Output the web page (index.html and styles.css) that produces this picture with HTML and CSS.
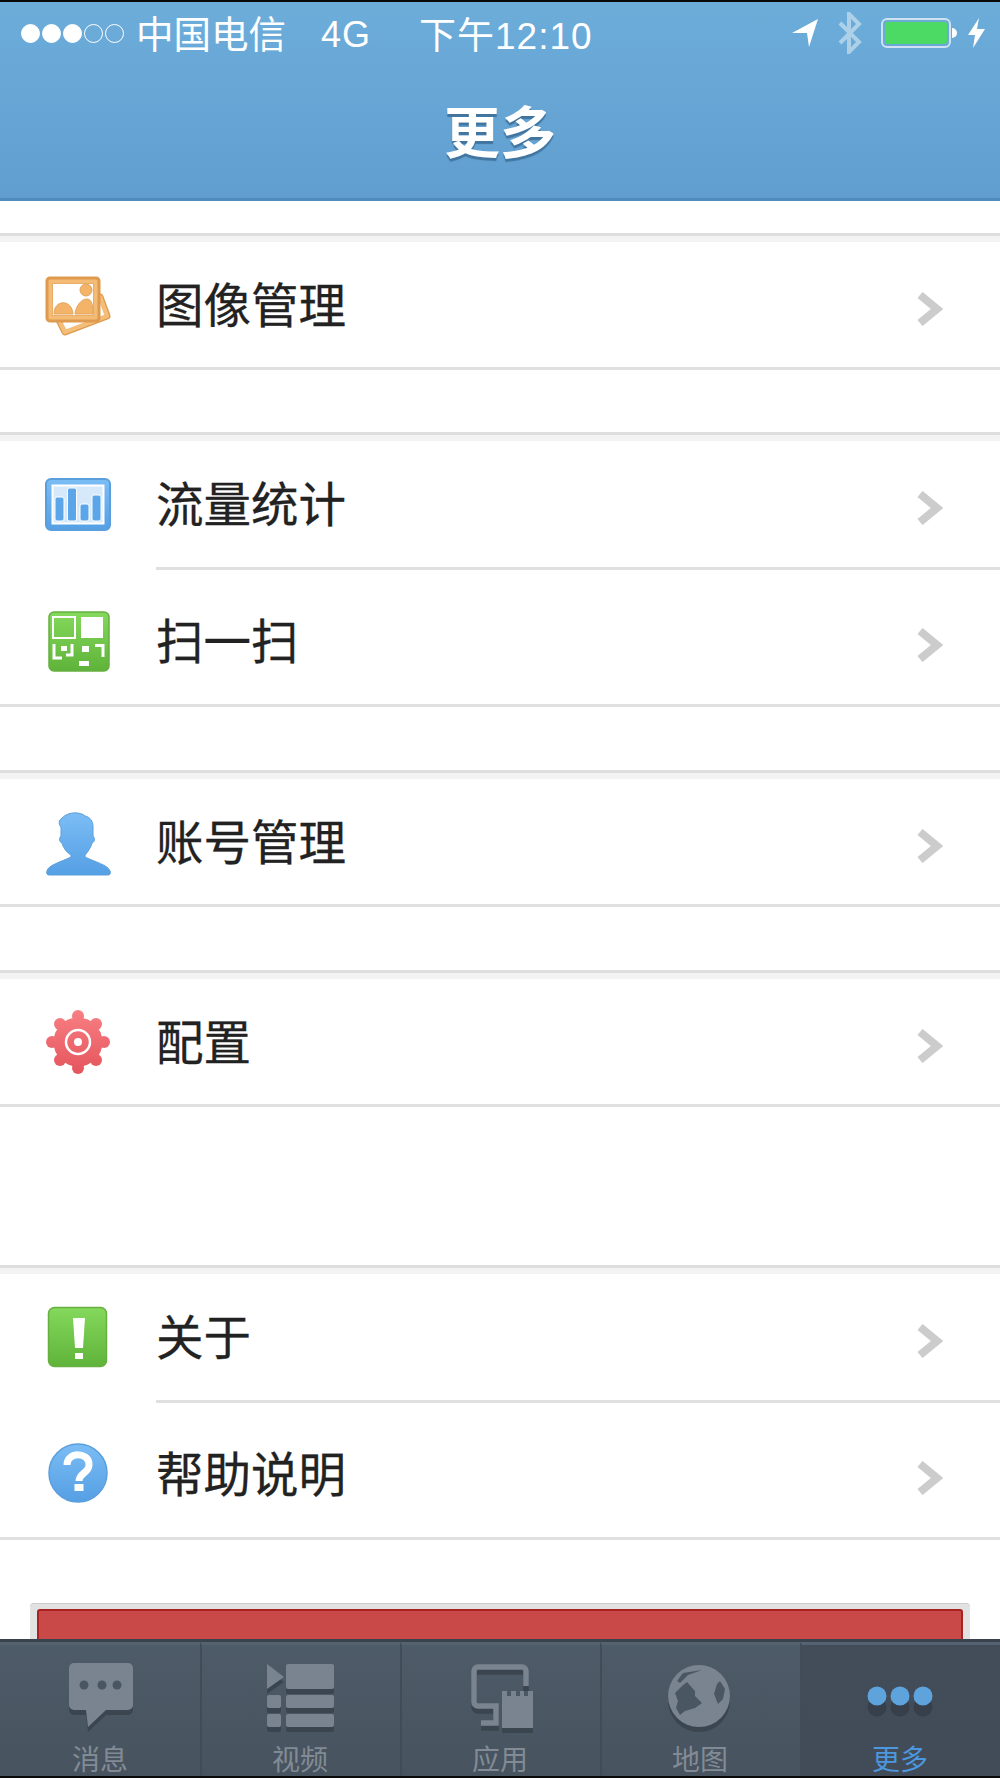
FILE: index.html
```html
<!DOCTYPE html>
<html lang="zh-CN">
<head>
  <meta charset="UTF-8">
  <title>更多</title>
  <meta name="viewport" content="width=device-width, initial-scale=1.0">
  <link rel="stylesheet" href="styles.css">
</head>
<body>
  <div class="phone">
    <header class="top-bar">
      <div class="status-bar">
        <div class="signal">
          <span class="dot on"></span><span class="dot on"></span><span class="dot on"></span><span class="dot"></span><span class="dot"></span>
        </div>
        <span class="carrier">中国电信</span>
        <span class="network">4G</span>
        <span class="clock">下午12:10</span>
        <div class="status-right">
          <svg class="st-arrow" width="26" height="28" viewBox="0 0 26 28"><path d="M0 14 26 0 17 28 15 14Z" fill="#fff"/></svg>
          <svg class="st-bt" width="24" height="42" viewBox="0 0 24 42"><path d="M2 11 21 30 11 40V2L21 12 2 31" fill="none" stroke="#fff" stroke-opacity=".45" stroke-width="4"/></svg>
          <div class="battery"><div class="battery-fill"></div></div>
          <div class="battery-nub"></div>
          <svg class="st-bolt" width="17" height="30" viewBox="0 0 17 30"><path d="M11 0 0 17H7L5 30 17 11H9Z" fill="#fff"/></svg>
        </div>
      </div>
      <h1 class="page-title">更多</h1>
    </header>

    <main class="content">
      <section class="group">
        <a class="row">
          <svg class="row-icon" viewBox="0 0 70 70">
            <path d="M17 52 22 62 64 46 57 27Z" fill="#fff" stroke="#de9a4e" stroke-width="7" stroke-linejoin="round"/>
            <path d="M17 52 22 62 64 46 57 27Z" fill="#fff" stroke="#f4bd78" stroke-width="4.500" stroke-linejoin="round"/>
            <rect x="4" y="8" width="52" height="43" rx="3" fill="#f4bb74" stroke="#de9a4e" stroke-width="3"/>
            <rect x="9" y="13" width="42" height="33" fill="#e8ad68"/>
            <rect x="10" y="14" width="40" height="31" fill="#fff"/>
            <circle cx="43" cy="20" r="6" fill="#f3b469" stroke="#e3a45c"/>
            <path d="M11 44C11 29 29 29 30 44Z" fill="#f3b469" stroke="#e3a45c"/>
            <path d="M32 44C33 36 38 29 44 29 49 29 50 36 50 44Z" fill="#f3b469" stroke="#e3a45c"/>
          </svg>
          <span class="row-label">图像管理</span>
          <svg class="chevron" width="26" height="34" viewBox="0 0 26 34"><path d="M3 3 20 17 3 31" fill="none" stroke="#ccc" stroke-width="8"/></svg>
        </a>
      </section>

      <section class="group group-double">
        <a class="row">
          <svg class="row-icon" viewBox="0 0 70 70">
            <defs>
              <linearGradient id="blue" x1="0" y1="0" x2="0" y2="1"><stop offset="0" stop-color="#7bbdf5"/><stop offset="1" stop-color="#559fe4"/></linearGradient>
            </defs>
            <rect x="3" y="10" width="64" height="51" rx="5" fill="url(#blue)" stroke="#5a9fdc" stroke-width="2"/>
            <rect x="9.500" y="16.500" width="51" height="38" fill="#d6e9fa" stroke="#fff" stroke-width="2"/>
            <g fill="#5ba6e8" stroke="#fff">
              <rect x="12" y="28" width="9" height="24" rx="2"/>
              <rect x="24.500" y="19" width="9" height="33" rx="2"/>
              <rect x="37" y="35" width="9" height="17" rx="2"/>
              <rect x="49" y="26" width="9" height="26" rx="2"/>
            </g>
          </svg>
          <span class="row-label">流量统计</span>
          <svg class="chevron" width="26" height="34" viewBox="0 0 26 34"><path d="M3 3 20 17 3 31" fill="none" stroke="#ccc" stroke-width="8"/></svg>
        </a>
        <a class="row inset">
          <svg class="row-icon" viewBox="0 0 70 70">
            <defs>
              <linearGradient id="green" x1="0" y1="0" x2="0" y2="1"><stop offset="0" stop-color="#84d95c"/><stop offset="1" stop-color="#5fb33a"/></linearGradient>
            </defs>
            <rect x="6" y="6" width="60" height="59" rx="5" fill="url(#green)" stroke="#66b040" stroke-width="1.500"/>
            <rect x="10" y="11" width="22" height="21" fill="none" stroke="#fff" stroke-width="2"/>
            <rect x="38" y="11" width="22" height="21" fill="#fff"/>
            <path d="M11 38V52H19M29 38V49H23M60 38V51" fill="none" stroke="#fff" stroke-width="3"/>
            <rect x="18" y="40" width="6" height="5" fill="#fff"/>
            <rect x="39" y="40" width="7" height="6" fill="#fff"/>
            <rect x="36" y="55" width="10" height="5" fill="#fff"/>
            <rect x="52" y="38" width="8" height="3" fill="#fff"/>
          </svg>
          <span class="row-label">扫一扫</span>
          <svg class="chevron" width="26" height="34" viewBox="0 0 26 34"><path d="M3 3 20 17 3 31" fill="none" stroke="#ccc" stroke-width="8"/></svg>
        </a>
      </section>

      <section class="group">
        <a class="row">
          <svg class="row-icon" viewBox="0 0 70 70">
            <path d="M4 64C5 58 18 55 28 50V48C23 45 20 40 19 36 16 35 16 31 18 29V20C15 17 16 13 19 11 26 4 38 5 42 9 47 10 50 14 50 20V29C52 31 52 35 49 36 48 40 45 45 42 48V50C52 55 65 58 67 64 68 66 67 68 65 68H6C4 68 3 66 4 64Z" fill="url(#blue)" stroke="#5a9fdc" stroke-width="1"/>
          </svg>
          <span class="row-label">账号管理</span>
          <svg class="chevron" width="26" height="34" viewBox="0 0 26 34"><path d="M3 3 20 17 3 31" fill="none" stroke="#ccc" stroke-width="8"/></svg>
        </a>
      </section>

      <section class="group group-spaced">
        <a class="row">
          <svg class="row-icon" viewBox="0 0 70 70">
            <defs>
              <linearGradient id="red" gradientUnits="userSpaceOnUse" x1="0" y1="3" x2="0" y2="66"><stop offset="0" stop-color="#f77f83"/><stop offset="1" stop-color="#e5555d"/></linearGradient>
            </defs>
            <g fill="url(#red)">
              <circle cx="35" cy="35" r="24.500"/>
              <circle cx="35" cy="9" r="6"/><circle cx="35" cy="61" r="6"/>
              <circle cx="9" cy="35" r="6"/><circle cx="61" cy="35" r="6"/>
              <circle cx="17" cy="17" r="6"/><circle cx="53" cy="17" r="6"/>
              <circle cx="17" cy="53" r="6"/><circle cx="53" cy="53" r="6"/>
            </g>
            <circle cx="35" cy="35" r="12" fill="none" stroke="#fff" stroke-width="2.500"/>
            <circle cx="35" cy="35" r="4" fill="#fff"/>
          </svg>
          <span class="row-label">配置</span>
          <svg class="chevron" width="26" height="34" viewBox="0 0 26 34"><path d="M3 3 20 17 3 31" fill="none" stroke="#ccc" stroke-width="8"/></svg>
        </a>
      </section>

      <section class="group group-double">
        <a class="row">
          <svg class="row-icon" viewBox="0 0 70 70">
            <rect x="5.500" y="5.500" width="58" height="59" rx="6" fill="url(#green)" stroke="#66b040" stroke-width="1.500"/>
            <path d="M30 16H42L40 46H32Z" fill="#fff"/>
            <rect x="32" y="51" width="8" height="6" fill="#fff"/>
          </svg>
          <span class="row-label">关于</span>
          <svg class="chevron" width="26" height="34" viewBox="0 0 26 34"><path d="M3 3 20 17 3 31" fill="none" stroke="#ccc" stroke-width="8"/></svg>
        </a>
        <a class="row inset">
          <svg class="row-icon" viewBox="0 0 70 70">
            <circle cx="35" cy="34" r="29" fill="url(#blue)" stroke="#5a9fdc" stroke-width="1.500"/>
            <path d="M24 26C24 12 47 13 46 26 46 34 36 34 36 42" fill="none" stroke="#fff" stroke-width="7"/>
            <rect x="31.500" y="45" width="9" height="7" fill="#fff"/>
          </svg>
          <span class="row-label">帮助说明</span>
          <svg class="chevron" width="26" height="34" viewBox="0 0 26 34"><path d="M3 3 20 17 3 31" fill="none" stroke="#ccc" stroke-width="8"/></svg>
        </a>
      </section>

      <div class="logout-wrap">
        <div class="logout-btn"></div>
      </div>
    </main>

    <nav class="tab-bar">
      <a class="tab">
        <svg class="tab-icon" viewBox="0 0 80 72">
          <path d="M14 4H68A5 5 0 0 1 73 9V46A5 5 0 0 1 68 51H46L28 68 26 51H14A5 5 0 0 1 9 46V9A5 5 0 0 1 14 4Z" class="ink"/>
          <circle cx="24" cy="26" r="4.500" class="hole"/><circle cx="42" cy="26" r="4.500" class="hole"/><circle cx="57" cy="26" r="4.500" class="hole"/>
        </svg>
        <span class="tab-label">消息</span>
      </a>
      <a class="tab">
        <svg class="tab-icon" viewBox="0 0 80 72">
          <g class="ink">
            <path d="M7 5 24 18 7 30Z"/>
            <rect x="26" y="5" width="48" height="25" rx="2"/>
            <rect x="7" y="36" width="14" height="13" rx="2"/>
            <rect x="26" y="36" width="48" height="13" rx="2"/>
            <rect x="7" y="55" width="14" height="13" rx="2"/>
            <rect x="26" y="55" width="48" height="13" rx="2"/>
          </g>
        </svg>
        <span class="tab-label">视频</span>
      </a>
      <a class="tab">
        <svg class="tab-icon" viewBox="0 0 80 72">
          <path d="M66 27V12A4 4 0 0 0 62 8H18A4 4 0 0 0 14 12V43A4 4 0 0 0 18 47H36V64H21" fill="none" stroke="#7a8490" stroke-width="5.500"/>
          <path d="M42 32H47V37H51V32H56V37H60V32H64V37H68V32H73V69H42Z" class="ink"/>
        </svg>
        <span class="tab-label">应用</span>
      </a>
      <a class="tab">
        <svg class="tab-icon" viewBox="0 0 80 72">
          <circle cx="39" cy="37" r="31" class="ink"/>
          <path d="M27 23 35 32V37L42 44 35 49 25 52 20 56 16 49 18 42 15 34 22 27Z" class="hole"/>
          <path d="M60 22 65 30 63 40 58 45 54 35 57 25Z" class="hole"/>
          <path d="M17 22 23 14 42 11 28 16 20 24Z" class="hole"/>
        </svg>
        <span class="tab-label">地图</span>
      </a>
      <a class="tab active">
        <svg class="tab-icon" viewBox="0 0 80 72">
          <g fill="#363f4a">
            <circle cx="17" cy="48" r="9.500"/><circle cx="40" cy="48" r="9.500"/><circle cx="63" cy="48" r="9.500"/>
          </g>
          <g fill="#5fa3dc">
            <circle cx="17" cy="37" r="9.500"/><circle cx="40" cy="37" r="9.500"/><circle cx="63" cy="37" r="9.500"/>
          </g>
        </svg>
        <span class="tab-label">更多</span>
      </a>
    </nav>
  </div>
</body>
</html>
```

FILE: styles.css
```css
* {
  box-sizing: border-box;
}

body {
  margin: 0;
  background-color: #fff;
  font-family: "Noto Sans CJK SC", sans-serif;
  color: #222;
}

.phone {
  width: 1000px;
  height: 1778px;
  display: flex;
  flex-direction: column;
  overflow: hidden;
}

/* header */
.top-bar {
  height: 201px;
  flex-shrink: 0;
  border-top: 2px solid #0a0a0a;
  border-bottom: 3px solid #4f8bbd;
  background: linear-gradient(#6dadda, #609ecf);
  color: #fff;
}

.status-bar {
  height: 62px;
  display: flex;
  align-items: center;
  padding-left: 21px;
  font-size: 37.500px;
}

.signal {
  display: flex;
  gap: 2px;
  width: 115px;
}

.dot {
  width: 19px;
  height: 19px;
  border-radius: 50%;
  border: 1px solid #fff;
}

.dot.on {
  background-color: #fff;
}

.carrier {
  width: 185px;
  line-height: 56px;
  margin-top: -2px;
}

.network {
  width: 100px;
  font-size: 36px;
  font-family: "Liberation Sans", sans-serif;
  letter-spacing: 1px;
  margin-top: 3px;
}

.clock {
  font-size: 37px;
  font-family: "Liberation Sans", "Noto Sans CJK SC", sans-serif;
  letter-spacing: 1px;
  margin-left: -2px;
}

.status-right {
  margin-left: auto;
  padding-right: 15px;
  display: flex;
  align-items: center;
}

.st-arrow {
  margin-right: 20px;
}

.st-bt {
  margin-right: 19px;
}

.battery {
  width: 70px;
  height: 30px;
  padding: 2px;
  border: 2px solid #cfe2f1;
  border-radius: 6px;
}

.battery-fill {
  height: 100%;
  border-radius: 3px;
  background-color: #4cd964;
}

.battery-nub {
  width: 5px;
  height: 10px;
  margin-left: 1px;
  margin-right: 11px;
  border-radius: 0 5px 5px 0;
  background-color: #fff;
}

.page-title {
  margin: 0;
  height: 134px;
  display: flex;
  align-items: center;
  justify-content: center;
  font-size: 56px;
  font-weight: 700;
  padding-bottom: 6px;
  text-shadow: 0 3px 1px #41759f;
}

/* list */
.content {
  flex: 1;
  overflow: hidden;
  padding-top: 32px;
}

.group {
  margin-bottom: 63px;
  border-bottom: 3px solid #e0e0e0;
}

.group:first-child {
  margin-bottom: 62px;
}

.group-spaced {
  margin-bottom: 158px;
}

.row {
  height: 134px;
  display: flex;
  align-items: center;
  padding-top: 6px;
  border-top: 3px solid #dedede;
  background: linear-gradient(#f3f3f3 6px, #fff 6px);
}

.group-double .row:first-child {
  height: 135px;
}

.row.inset {
  position: relative;
  height: 137px;
  border-top: 0;
  background: #fff;
  padding-top: 11px;
}

.row.inset::before {
  content: "";
  position: absolute;
  top: 0;
  left: 156px;
  right: 0;
  height: 3px;
  background-color: #e0e0e0;
}

.row-icon {
  width: 70px;
  height: 70px;
  margin-left: 43px;
  margin-right: 43px;
  flex-shrink: 0;
}

.row-label {
  flex: 1;
  font-size: 47.500px;
  line-height: 60px;
  padding-bottom: 4px;
  -webkit-text-stroke: 0.3px #222;
}

.chevron {
  margin-right: 57px;
  margin-top: 8px;
}

.logout-wrap {
  margin: 0 30px;
  height: 110px;
  padding: 5px 7px 0;
  background-color: #e2e2e2;
  border-top: 1px solid #ccc;
  border-radius: 4px 4px 0 0;
}

.logout-btn {
  height: 100%;
  background-color: #c94848;
  border: 2px solid #a92222;
  border-radius: 3px;
}

/* tab bar */
.tab-bar {
  height: 139px;
  flex-shrink: 0;
  display: grid;
  grid-template-columns: repeat(5, 200px);
  border-top: 3px solid #38434e;
  border-bottom: 2px solid #0a0a0a;
  background: linear-gradient(#4e5b68, #47535f);
}

.tab {
  display: flex;
  flex-direction: column;
  align-items: center;
  padding-top: 14px;
  padding-right: 2px;
  border-top: 3px solid #55626f;
  border-left: 2px solid #414c57;
}

.tab:first-child {
  padding-right: 0;
  border-left: 0;
}

.tab.active {
  background: linear-gradient(#434d59, #414c58);
}

.tab-icon {
  width: 80px;
  height: 72px;
  flex-shrink: 0;
  filter: drop-shadow(0 5px 0 #3a4550);
}

.tab.active .tab-icon {
  filter: none;
}

.ink {
  fill: #7a8490;
}

.hole {
  fill: #4a5662;
}

.tab-label {
  margin-top: 10px;
  font-size: 28px;
  line-height: 34px;
  color: #828b95;
}

.tab.active .tab-label {
  color: #4c97dd;
}
```
